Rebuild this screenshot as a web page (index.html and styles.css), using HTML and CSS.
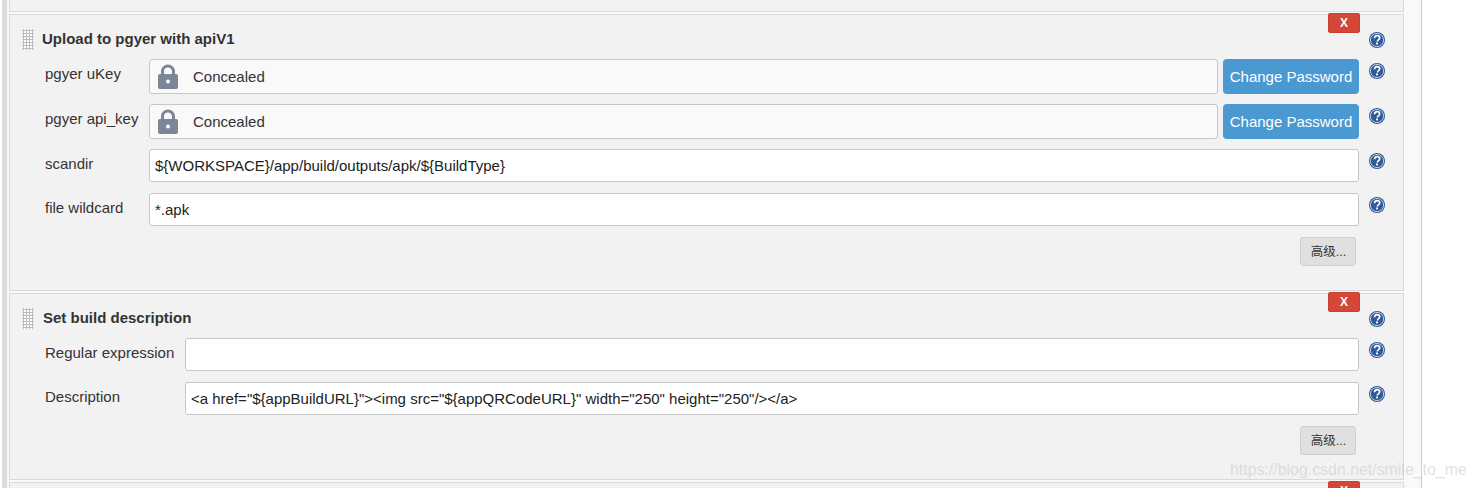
FILE: index.html
```html
<!DOCTYPE html>
<html lang="en">
<head>
    <meta charset="UTF-8">
    <meta name="viewport" content="width=device-width, initial-scale=1.0">
    <title>Post-build actions</title>
    <link rel="stylesheet" href="styles.css">
</head>
<body>
    <svg class="defs" width="0" height="0" aria-hidden="true">
        <defs>
            <symbol id="help" viewBox="0 0 16 16">
                <circle cx="8" cy="8" r="8" fill="#2f5a97"/>
                <circle cx="8" cy="8" r="6.600" fill="none" stroke="#e4eaf3" stroke-width="0.800"/>
                <path d="M5.500 6.300C5.600 4.500 6.700 3.600 8.100 3.600c1.500 0 2.600.9 2.600 2.200 0 1.100-.7 1.600-1.400 2.100-.6.400-.9.800-.9 1.600" fill="none" stroke="#fff" stroke-width="1.700"/>
                <rect x="7.100" y="10.500" width="1.900" height="1.900" fill="#fff"/>
            </symbol>
            <symbol id="lock" viewBox="0 0 20 26">
                <path d="M4.500 11V7.500a5.500 5.500 0 0 1 11 0V11" fill="none" stroke="#7b8798" stroke-width="3"/>
                <path d="M2 10h16a2 2 0 0 1 2 2v11a2 2 0 0 1-2 2H2a2 2 0 0 1-2-2V12a2 2 0 0 1 2-2z" fill="#7b8798"/>
                <circle cx="10" cy="17.500" r="2" fill="#fff"/>
            </symbol>
        </defs>
    </svg>

    <div class="page">
        <div class="rail"></div>
        <main class="content">
            <div class="section section-stub"></div>

            <section class="section section-upload">
                <button class="delete">X</button>
                <div class="section-head">
                    <span class="handle"></span>
                    <h3>Upload to pgyer with apiV1</h3>
                    <svg class="help"><use href="#help"/></svg>
                </div>
                <div class="row row-secret">
                    <label>pgyer uKey</label>
                    <div class="concealed">
                        <svg class="lock"><use href="#lock"/></svg>
                        <span>Concealed</span>
                    </div>
                    <button class="change">Change Password</button>
                    <svg class="help"><use href="#help"/></svg>
                </div>
                <div class="row row-secret">
                    <label>pgyer api_key</label>
                    <div class="concealed">
                        <svg class="lock"><use href="#lock"/></svg>
                        <span>Concealed</span>
                    </div>
                    <button class="change">Change Password</button>
                    <svg class="help"><use href="#help"/></svg>
                </div>
                <div class="row">
                    <label>scandir</label>
                    <input class="field" type="text" value="${WORKSPACE}/app/build/outputs/apk/${BuildType}">
                    <svg class="help"><use href="#help"/></svg>
                </div>
                <div class="row">
                    <label>file wildcard</label>
                    <input class="field" type="text" value="*.apk">
                    <svg class="help"><use href="#help"/></svg>
                </div>
                <div class="actions"><button class="advanced">高级...</button></div>
            </section>

            <section class="section section-desc">
                <button class="delete">X</button>
                <div class="section-head">
                    <span class="handle"></span>
                    <h3>Set build description</h3>
                    <svg class="help"><use href="#help"/></svg>
                </div>
                <div class="row row-wide">
                    <label>Regular expression</label>
                    <input class="field" type="text">
                    <svg class="help"><use href="#help"/></svg>
                </div>
                <div class="row row-wide">
                    <label>Description</label>
                    <input class="field" type="text" value='&lt;a href="${appBuildURL}"&gt;&lt;img src="${appQRCodeURL}" width="250" height="250"/&gt;&lt;/a&gt;'>
                    <svg class="help"><use href="#help"/></svg>
                </div>
                <div class="actions"><button class="advanced">高级...</button></div>
            </section>

            <section class="section section-next">
                <button class="delete">X</button>
            </section>
        </main>
        <div class="gutter"></div>
    </div>

    <div class="watermark">https://blog.csdn.net/smile_to_me</div>
</body>
</html>
```

FILE: styles.css
```css
html, body {
    height: 100%;
}

body {
    margin: 0;
    overflow: hidden;
    background-color: #ffffff;
    font-family: "Liberation Sans", "Noto Sans CJK SC", sans-serif;
    font-size: 15px;
    color: #333;
}

.defs {
    position: absolute;
}

.page {
    display: flex;
    height: 488px;
    overflow: hidden;
}

.rail {
    width: 5px;
    margin-left: 2px;
    background-color: #dcdcdc;
}

.content {
    width: 1395px;
    padding: 0 17px 0 2px;
    background-color: #f9f9f9;
}

.gutter {
    width: 53px;
    border-left: 1px solid #cccccc;
}

.section {
    position: relative;
    box-sizing: border-box;
    margin-bottom: 2px;
    border: 1px solid #d9d9d9;
    background-color: #f2f2f2;
    width: 1395px;
}

.section-stub {
    height: 12px;
    border-top: none;
}

.section-upload {
    height: 277px;
}

.section-desc {
    height: 187px;
}

.section-next {
    height: 40px;
}

.delete {
    position: absolute;
    top: -2px;
    left: 1318px;
    width: 32px;
    height: 20px;
    padding: 0;
    border: 1px solid #c9402f;
    border-radius: 2px;
    background-color: #d44637;
    color: #fff;
    font-family: inherit;
    font-size: 12px;
    font-weight: bold;
}

.section-head {
    display: flex;
    align-items: center;
    height: 22px;
    margin-top: 13px;
    padding-left: 12px;
}

.section-head h3 {
    flex: 1;
    margin: 0 0 0 8px;
    font-size: 15px;
    line-height: 22px;
}

.section-desc .section-head h3 {
    margin-left: 9px;
}

.section-head .help {
    margin: 2px 18px 0 0;
}

.handle {
    width: 12px;
    height: 21px;
    background-color: #fcfcfc;
    background-image: radial-gradient(circle at 1.500px 1.500px, #bcbcbc 1px, transparent 1.200px);
    background-size: 3px 3px;
}

.row {
    display: grid;
    grid-template-columns: 104px 1210px 26px;
    margin: 11px 18px 0 35px;
    height: 33px;
    align-items: start;
}

.section-head + .row {
    margin-top: 9px;
}

.row-secret {
    grid-template-columns: 104px 1069px 141px 26px;
    height: 35px;
    margin-top: 10px;
}

.row-secret + .row:not(.row-secret) {
    margin-top: 10px;
}

.row-wide {
    grid-template-columns: 140px 1174px 26px;
}

.row label {
    padding-top: 6px;
    line-height: 18px;
    color: #333;
}

.field,
.concealed {
    box-sizing: border-box;
    border: 1px solid #c8c8c8;
    border-radius: 3px;
    background-color: #fff;
    font-family: inherit;
    font-size: 15px;
    color: #333;
}

.field {
    width: 100%;
    height: 33px;
    padding: 0 6px 0 5px;
    color: #222;
}

.concealed {
    display: flex;
    align-items: center;
    gap: 15px;
    height: 35px;
    padding-left: 8px;
    background-color: #f9f9f9;
}

.lock {
    width: 20px;
    height: 26px;
}

.change {
    width: 136px;
    height: 35px;
    margin-left: 5px;
    padding: 0;
    border: none;
    border-radius: 4px;
    background-color: #4b99d3;
    color: #fff;
    font-family: inherit;
    font-size: 15px;
}

.help {
    width: 16px;
    height: 16px;
    margin: 4px 0 0 10px;
}

.actions {
    display: flex;
    justify-content: flex-end;
    margin: 11px 47px 0 0;
}

.advanced {
    width: 56px;
    height: 29px;
    padding: 0 0 2px 1px;
    border: 1px solid #cfcfcf;
    border-radius: 3px;
    background-color: #e0e0e0;
    color: #333;
    font-family: inherit;
    font-size: 12.500px;
}

.watermark {
    position: absolute;
    top: 460px;
    left: 1230px;
    font-size: 15.900px;
    line-height: 20px;
    color: rgba(200, 200, 200, 0.55);
}
```
